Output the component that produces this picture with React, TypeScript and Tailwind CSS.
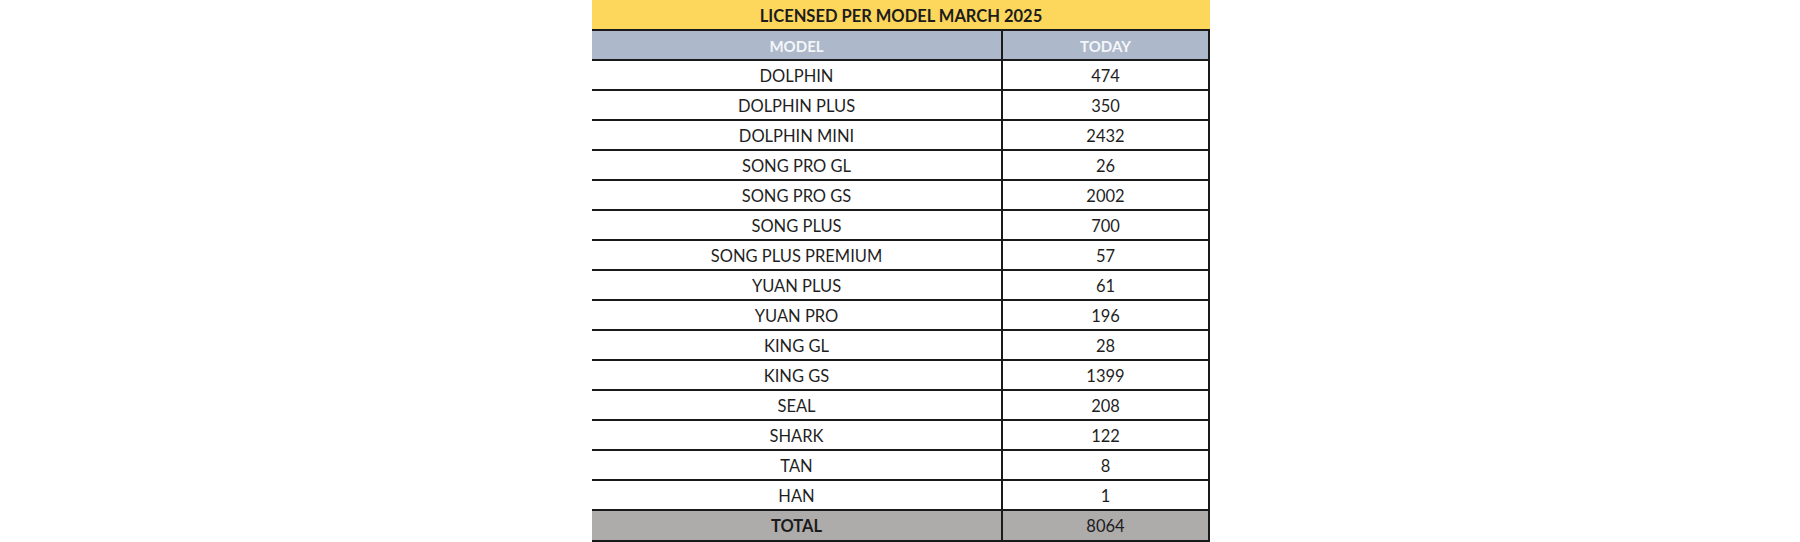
const rows: [string, string][] = [
  ['DOLPHIN', '474'],
  ['DOLPHIN PLUS', '350'],
  ['DOLPHIN MINI', '2432'],
  ['SONG PRO GL', '26'],
  ['SONG PRO GS', '2002'],
  ['SONG PLUS', '700'],
  ['SONG PLUS PREMIUM', '57'],
  ['YUAN PLUS', '61'],
  ['YUAN PRO', '196'],
  ['KING GL', '28'],
  ['KING GS', '1399'],
  ['SEAL', '208'],
  ['SHARK', '122'],
  ['TAN', '8'],
  ['HAN', '1'],
];

const App = () => {
  return (
    <div className="w-[1800px] h-[542px] bg-white flex justify-start overflow-hidden" style={{ fontFamily: 'Lato, "Open Sans", sans-serif' }}>
      <div className="ml-[592px] w-[618px] flex flex-col">
        {/* Title */}
        <div className="h-[31px] pt-[3px] bg-[#fdd65c] border-b-2 border-[#1a1a1a] flex items-center justify-center">
          <span className="text-[16.5px] font-bold text-[#1c1c1c]">LICENSED PER MODEL MARCH 2025</span>
        </div>

        {/* Header */}
        <div className="h-[30px] bg-[#adb9ca] border-b-2 border-r-2 border-[#1a1a1a] grid grid-cols-[411px_1fr]">
          <div className="pt-[2px] flex items-center justify-center border-r-2 border-[#1a1a1a] text-[15px] font-bold text-[#f4f6f9]">MODEL</div>
          <div className="pt-[2px] flex items-center justify-center text-[15px] font-bold text-[#f4f6f9]">TODAY</div>
        </div>

        {/* Data rows */}
        {rows.map(([model, today]) => (
          <div key={model} className="h-[30px] border-b-2 border-r-2 border-[#1a1a1a] grid grid-cols-[411px_1fr] text-[16.5px] text-[#1f1f1f]">
            <div className="pt-[2px] flex items-center justify-center border-r-2 border-[#1a1a1a]">{model}</div>
            <div className="pt-[2px] flex items-center justify-center">{today}</div>
          </div>
        ))}

        {/* Total */}
        <div className="h-[31px] bg-[#aeabab] border-b-2 border-r-2 border-[#1a1a1a] grid grid-cols-[411px_1fr] text-[16.5px] text-[#1c1c1c]">
          <div className="pt-[2px] flex items-center justify-center border-r-2 border-[#1a1a1a] font-bold">TOTAL</div>
          <div className="pt-[2px] flex items-center justify-center">8064</div>
        </div>
      </div>
    </div>
  );
};

export default App;
